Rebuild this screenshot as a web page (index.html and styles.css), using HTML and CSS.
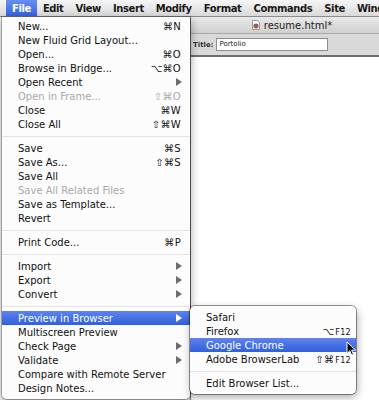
FILE: index.html
```html
<!DOCTYPE html>
<html lang="en">
<head>
    <meta charset="UTF-8">
    <title>resume.html</title>
    <link rel="stylesheet" href="styles.css">
</head>
<body>
    <div class="menubar">
        <span class="mb-item active">File</span>
        <span class="mb-item">Edit</span>
        <span class="mb-item">View</span>
        <span class="mb-item">Insert</span>
        <span class="mb-item">Modify</span>
        <span class="mb-item">Format</span>
        <span class="mb-item">Commands</span>
        <span class="mb-item">Site</span>
        <span class="mb-item">Window</span>
    </div>

    <div class="desk">
        <div class="desk-left"></div>
        <div class="docwin">
            <div class="doc-title">
                <svg class="doc-icon" width="8" height="10" viewBox="0 0 8 10">
                    <path d="M0.5 0.5h5l2 2v7h-7z" fill="#fff" stroke="#9a9a9a"/>
                    <circle cx="4" cy="6" r="2.6" fill="#e2541b"/>
                    <path d="M2 4.2l2 1.8 2-1.8" fill="none" stroke="#2c6fd0" stroke-width="1.2"/>
                </svg>
                <span>resume.html*</span>
            </div>
            <div class="doc-toolbar">
                <span class="title-label">Title:</span>
                <span class="title-field">Portolio</span>
            </div>
            <div class="doc-body"></div>
        </div>
    </div>

    <div class="menu file-menu">
        <div class="mi"><span>New...</span><span class="key">⌘N</span></div>
        <div class="mi"><span>New Fluid Grid Layout...</span></div>
        <div class="mi"><span>Open...</span><span class="key">⌘O</span></div>
        <div class="mi"><span>Browse in Bridge...</span><span class="key">⌥⌘O</span></div>
        <div class="mi sub"><span>Open Recent</span><i class="arrow"></i></div>
        <div class="mi disabled"><span>Open in Frame...</span><span class="key">⇧⌘O</span></div>
        <div class="mi"><span>Close</span><span class="key">⌘W</span></div>
        <div class="mi"><span>Close All</span><span class="key">⇧⌘W</span></div>
        <div class="sep"></div>
        <div class="mi"><span>Save</span><span class="key">⌘S</span></div>
        <div class="mi"><span>Save As...</span><span class="key">⇧⌘S</span></div>
        <div class="mi"><span>Save All</span></div>
        <div class="mi disabled"><span>Save All Related Files</span></div>
        <div class="mi"><span>Save as Template...</span></div>
        <div class="mi"><span>Revert</span></div>
        <div class="sep"></div>
        <div class="mi"><span>Print Code...</span><span class="key">⌘P</span></div>
        <div class="sep"></div>
        <div class="mi sub"><span>Import</span><i class="arrow"></i></div>
        <div class="mi sub"><span>Export</span><i class="arrow"></i></div>
        <div class="mi sub"><span>Convert</span><i class="arrow"></i></div>
        <div class="sep"></div>
        <div class="mi sub hl">
            <span>Preview in Browser</span><i class="arrow"></i>
            <div class="menu submenu">
                <div class="mi"><span>Safari</span></div>
                <div class="mi"><span>Firefox</span><span class="key">⌥<small>F12</small></span></div>
                <div class="mi hl"><span>Google Chrome</span></div>
                <div class="mi"><span>Adobe BrowserLab</span><span class="key">⇧⌘<small>F12</small></span></div>
                <div class="sep"></div>
                <div class="mi"><span>Edit Browser List...</span></div>
            </div>
        </div>
        <div class="mi"><span>Multiscreen Preview</span></div>
        <div class="mi sub"><span>Check Page</span><i class="arrow"></i></div>
        <div class="mi sub"><span>Validate</span><i class="arrow"></i></div>
        <div class="mi"><span>Compare with Remote Server</span></div>
        <div class="mi"><span>Design Notes...</span></div>
    </div>

    <svg class="cursor" width="10" height="15" viewBox="0 0 10 15">
        <path d="M1 1v11.5l2.8-2.7 1.9 4.4 1.8-0.8-1.9-4.3h3.9z" fill="#000" stroke="#fff" stroke-width="1"/>
    </svg>
</body>
</html>
```

FILE: styles.css
```css
body {
    margin: 0;
    width: 379px;
    height: 400px;
    overflow: hidden;
    position: relative;
    display: flex;
    flex-direction: column;
    background: #efefef;
    font-family: "DejaVu Sans", Verdana, sans-serif;
    font-size: 10px;
    color: #111;
}

.menubar {
    height: 17px;
    flex: none;
    display: flex;
    align-items: stretch;
    padding-left: 6px;
    background: linear-gradient(#f6f6f6, #d9d9d9);
    border-bottom: 1px solid #8c8c8c;
    box-sizing: border-box;
    white-space: nowrap;
    overflow: hidden;
}

.mb-item {
    display: flex;
    align-items: center;
    padding: 0 6px;
    font-weight: bold;
    letter-spacing: -0.4px;
    color: #1a1a1a;
}

.mb-item.active {
    background: linear-gradient(#6a8df0, #3464dc);
    color: #fff;
}

.desk {
    flex: 1;
    display: flex;
}

.desk-left {
    width: 190px;
    flex: none;
}

.docwin {
    flex: 1;
    display: flex;
    flex-direction: column;
    border-left: 1px solid #7a7a7a;
    background: #fff;
}

.doc-title {
    height: 16px;
    display: flex;
    align-items: center;
    justify-content: center;
    gap: 4px;
    padding-left: 14px;
    background: linear-gradient(#e9e9e9, #cfcfcf);
    border-bottom: 1px solid #a9a9a9;
    font-size: 10px;
    color: #222;
}

.doc-toolbar {
    height: 21px;
    display: flex;
    align-items: center;
    gap: 3px;
    padding-left: 2px;
    background: #d9d9d9;
    border-bottom: 2px solid #6e6e6e;
    font-size: 7px;
}

.title-label {
    font-weight: bold;
    color: #333;
}

.title-field {
    width: 108px;
    height: 11px;
    line-height: 11px;
    padding-left: 2px;
    background: #fff;
    border: 1px solid #8d8d8d;
    color: #222;
}

.doc-body {
    flex: 1;
}

.menu {
    position: absolute;
    background: rgba(252, 252, 252, 0.98);
    box-sizing: border-box;
}

.file-menu {
    top: 17px;
    left: 2px;
    width: 188px;
    padding: 2px 0 4px;
    border-radius: 0 0 5px 5px;
    box-shadow: 0 0 0 1px rgba(0, 0, 0, 0.25), 1px 3px 8px rgba(0, 0, 0, 0.35);
}

.mi {
    position: relative;
    height: 14px;
    display: flex;
    align-items: center;
    justify-content: space-between;
    padding: 0 9px 0 16px;
    white-space: nowrap;
}

.mi.disabled {
    color: #a9a9a9;
}

.mi.hl {
    background: linear-gradient(#5f83ee, #2f60dc);
    color: #fff;
}

.key {
    letter-spacing: 0.3px;
}

.key small {
    font-size: 8px;
    margin-left: 1px;
}

.arrow {
    width: 0;
    height: 0;
    margin-right: -1px;
    border-left: 6px solid #6d6d6d;
    border-top: 4px solid transparent;
    border-bottom: 4px solid transparent;
}

.mi.hl > .arrow {
    border-left-color: #fff;
}

.sep {
    height: 1px;
    margin: 5px 0 4px;
    background: #e3e3e3;
}

.submenu {
    top: -5px;
    left: 188px;
    width: 166px;
    padding: 4px 0;
    border-radius: 5px;
    color: #111;
    box-shadow: 0 0 0 1px rgba(0, 0, 0, 0.4), 1px 3px 8px rgba(0, 0, 0, 0.35);
}

.submenu .mi {
    padding: 0 5px 0 16px;
}

.cursor {
    position: absolute;
    left: 346px;
    top: 341px;
}
```
